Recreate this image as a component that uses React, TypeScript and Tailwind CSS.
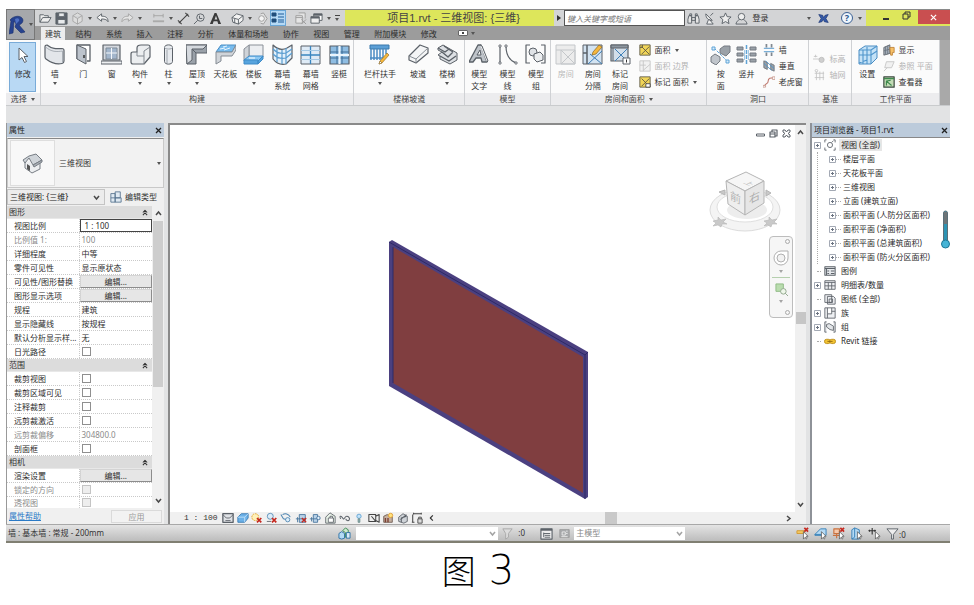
import React from "react";

type P = { children: React.ReactNode; className?: string; box?: string };

const Svg = ({ children, className = "w-[21px] h-[21px]", box = "0 0 21 21" }: P) => (
  <svg viewBox={box} className={`${className} shrink-0`} fill="none" stroke="#5b6168" strokeWidth="1" strokeLinejoin="round" aria-hidden="true">
    {children}
  </svg>
);

// 14px toolbar icon
const Mini = ({ children, className = "w-[13px] h-[13px]" }: P) => (
  <Svg box="0 0 14 14" className={className}>{children}</Svg>
);

const Caret = () => (
  <svg viewBox="0 0 4 3" className="w-1 h-[3px] shrink-0" aria-hidden="true"><path d="M0 0h4L2 3z" fill="#555" /></svg>
);

const Chevron = ({ dir = "down" }: { dir?: "down" | "up" | "right" }) => (
  <svg viewBox="0 0 7 7" className="w-[7px] h-[7px] shrink-0 pointer-events-none" fill="none" stroke="#4a4a4a" strokeWidth="1.5" aria-hidden="true">
    <path d={dir === "down" ? "M1 2l2.500 3L6 2" : dir === "up" ? "M1 5l2.500-3L6 5" : "M2 1l3 2.500L2 6"} />
  </svg>
);

const Pencil = () => (
  <g stroke="#8a6420" strokeWidth=".6"><path d="M11 17l7-8 2 2-7 8-3 1z" fill="#f5b73c" /><path d="M10 20l1-3 2 2z" fill="#fff" /></g>
);

/* ---------- Ribbon icons ---------- */
const icons: Record<string, React.ReactNode> = {
  cursor: <Svg><path d="M7 3v12l3-2.500 2.500 5 2-1-2.500-5h4z" fill="#fff" /></Svg>,
  wall: <Svg><path d="M1 3q0-2 2-2c5 4 9 4 15 3.500q2 0 2 2V17q0 2-2 2.500C12 21 6 18 2 15q-1-1-1-2z" fill="#e3e6ea" strokeWidth="1.200" /><path d="M1.500 3c6 5 11 5 17 4M18.500 7v12" stroke="#a9afb6" /></Svg>,
  door: <Svg><path d="M4 15V1h13v16h-3" fill="#fff" strokeWidth="1.300" /><path d="M4 1l9 4v15l-9-5z" fill="#bcc3cc" /><path d="M11 11v3" stroke="#333" strokeWidth="1.500" /></Svg>,
  window: <Svg><path d="M2 1h17v15H2z" fill="#d5d9df" strokeWidth="1.200" /><path d="M5 4h11v11H5z" fill="#a3b6cc" stroke="#7f8b98" /><path d="M10.500 4v11M5 9h11" stroke="#f4f7fa" /><path d="M0 17h21v3H0z" fill="#eef0f2" /></Svg>,
  part: <Svg><path d="M1 10q0-2 2-2h4V4q0-3 4-3h7q2 0 2 2v10l-6 7H3q-2 0-2-2z" fill="#eceef0" strokeWidth="1.200" /><path d="M7 8v4h7V7l6-4M14 12v8" stroke="#858b92" /></Svg>,
  column: <Svg><path d="M6.500 3.500v14c0 3.500 8 3.500 8 0v-14c0-3.500-8-3.500-8 0z" fill="#e7eaee" /><path d="M6.500 3.500c0 2 8 2 8 0M9 6v13" stroke="#a0a6ad" /></Svg>,
  roof: <Svg><path d="M0 1h21v8h-11v11H1z" fill="#9aa1a9" /><path d="M0 1h21l-4 4H6v11l-5 4z" fill="#d5d9de" /><path d="M6 5l4 4" /></Svg>,
  ceiling: <Svg><path d="M1 8l5-7h15l-4 7z" fill="#78bcee" stroke="#4b8ec4" /><path d="M5 5l5-1M9 6l6-2M8 3l4-1" stroke="#e8f5ff" /><path d="M1 8h16l4-7v5l-4 6H6v5l-5 3z" fill="#d0d4d9" stroke="#858c94" /></Svg>,
  floor: <Svg><path d="M6 1h14v12H6z" fill="#eceef1" stroke="#8a9098" /><path d="M1 5l5-4v12l-5 4z" fill="#cfd3d8" stroke="#8a9098" /><path d="M1 16l5-4h14l-5 5z" fill="#8cc8f3" stroke="#3f8bc8" /><path d="M1 16h14v4H1zM15 17l5-5v3l-5 5z" fill="#57a4de" stroke="#3f8bc8" /><path d="M6 14h6" stroke="#fff" /></Svg>,
  curtain: <Svg><path d="M1 1c5 5 10 5 14 3l5-3v13l-6 6C9 21 4 19 1 15z" fill="#e4f1fb" strokeWidth="1.200" /><path d="M1 5c5 5 9 5 13 4l6-4M1 10c5 5 9 5 13 4l6-5M5 4v14M10 6v14M14 4v16" stroke="#5a9dd0" strokeWidth="1.200" /></Svg>,
  grid: <Svg><path d="M1 2h19v18H1z" fill="#dfebf6" /><path d="M1 11h19M10.500 2v18" stroke="#3a86c0" strokeWidth="1.300" /><path d="M1 6.500h19M1 15.500h19" stroke="#a3c8e4" /></Svg>,
  mullion: <Svg><path d="M1 2h19v18H1z" fill="#8fbde2" strokeWidth="1.200" /><path d="M8 2v18M13 2v18M1 8h19M1 14h19" stroke="#3c6c97" /><path d="M10.500 2v18M1 11h19" stroke="#eaf4fc" strokeWidth="2" /></Svg>,
  rail: <Svg><path d="M1 1h19v4H1z" fill="#5b9fd6" stroke="#3a78ab" /><path d="M2 5v11M5 5v11M8 5v11M11 5v11M14 5v9M17 5v5M1 14h14" stroke="#4b8cc4" strokeWidth="1.500" /><Pencil /></Svg>,
  ramp: <Svg><path d="M1 12L12 1l8 3v5L8 19l-7-3z" fill="#f4f5f6" strokeWidth="1.200" /><path d="M1 12l7 3L20 4M8 15v4" stroke="#878d94" /></Svg>,
  stairs: <Svg><path d="M1 4l5-3 14 8v7l-7 4-10-5v-3l-2-1 4-3-4-2z" fill="#dde0e4" /><path d="M1 4l7 4 4-3M5 8l6 5 5-5M3 12l9 5 7-5M7 2l9 6" strokeWidth="1.400" /></Svg>,
  text: <Svg><path d="M0 18L9 1h3l6 17h-5l-1-4H7l-3 4z" fill="#bfc4ca" strokeWidth="1.300" /><path d="M8 11l3-5 1 5zM11 1l2 1 6 15-1 1" fill="#f4f5f6" /></Svg>,
  line: <Svg><path d="M3 2v17M9 2c0 9 4 15 11 17" strokeWidth="1.200" /><path d="M2 1h2v2H2zM2 18h2v2H2zM8 1h2v2H8zM18 18h2v2h-2z" fill="#fff" strokeWidth=".8" /></Svg>,
  group: <Svg><path d="M5 1H1v18h4M16 1h4v18h-4" strokeWidth="1.200" /><circle cx="8" cy="8" r="4" fill="#dfe2e6" /><path d="M9 10l6-2 3 3v5l-6 2-3-3z" fill="#eceef0" /></Svg>,
  room: <Svg><g stroke="#c4c7ca"><path d="M1 1h19v19H1z" fill="#ececec" /><path d="M6 6h14v14H6zM6 6l14 14M20 6L6 20M1 6h5" /></g></Svg>,
  separate: <Svg><path d="M1 1h19v19H1z" fill="#d3e3f1" /><path d="M5 1v8H1M5 9v11" strokeWidth="1.500" /><path d="M6 20L20 7M8 10l12 10" stroke="#3d7db5" /><path d="M11 8l6-7 3 2-6 7-4 1z" fill="#f5b73c" stroke="#8a6420" strokeWidth=".7" /></Svg>,
  tagroom: <Svg><path d="M1 1h17v16H1z" fill="#d3dee9" strokeWidth="1.200" /><path d="M1 1h17v3H1zM3 4v13" fill="#8d969f" /><path d="M5 17L17 5M5 5l12 12" stroke="#3f80b8" /><path d="M13 14h7v6h-7z" fill="#fff" /><path d="M16.500 15.500v3" stroke="#333" /></Svg>,
  byface: <Svg><path d="M10 5l4-3h6v6l-4 4-6-3z" fill="#9aa1a8" stroke="#757b82" /><path d="M1 13l4-3 5 3v4l-4 4-5-3z" fill="#c0c5cb" stroke="#757b82" /><path d="M4 4l13 13" stroke="#5fa3d6" strokeDasharray="3 1" /><path d="M2 3h3v3H2zM16 16h3v3h-3z" fill="#d7ecfb" stroke="#5fa3d6" /></Svg>,
  shaft: <Svg><path d="M1 3h6v3H1zM1 9h6v3H1zM1 15h6v3H1zM14 3h6v3h-6zM14 9h6v3h-6zM14 15h6v3h-6z" fill="#9aa1a8" stroke="#757b82" /><path d="M10.500 1v19" stroke="#5fa3d6" strokeWidth="1.500" strokeDasharray="4 1" /><path d="M8.500 6v10M12.500 6v10" stroke="#a6cbe6" /></Svg>,
  set: <Svg><path d="M2 6l6-4h12v12l-6 6H2z" fill="#c4e2f7" stroke="#4a8cc2" /><path d="M2 6h12v14M14 6l6-4M2 11h12l6-4M6 6v14M10 6v14M10 3v13l-8 3" stroke="#4f95cc" strokeWidth="1.100" /></Svg>,
  area: <Mini className="w-3 h-3"><path d="M1 1h12v12H1z" fill="#f1d558" stroke="#5a5540" /><path d="M3 3l9 9M12 3l-9 9M1 4h3V1" stroke="#5a5540" /></Mini>,
  bound: <Mini className="w-3 h-3"><path d="M1 1h12v12H1zM5 1v12M1 6h7M5 12l8-7" fill="#f1f1f1" stroke="#c4c4c4" /></Mini>,
  tagarea: <Mini className="w-3 h-3"><path d="M1 1h12v12H1z" fill="#f1d558" stroke="#5a5540" /><path d="M3 3l9 9M12 3l-9 9" stroke="#5a5540" /><path d="M8 9h5v4H8z" fill="#fff" stroke="#444" /></Mini>,
  owall: <Mini className="w-3 h-3"><path d="M1 5h12M1 9h12" stroke="#3c8ac6" /><path d="M4 0v4M10 0v4M4 10v4M10 10v4" stroke="#808890" strokeWidth="2" /></Mini>,
  vertical: <Mini className="w-3 h-3"><path d="M1 1l4 2v8L1 9zM9 4l4 2v7l-4-2z" fill="#9aa1a8" stroke="#6d747b" /><path d="M3 1l10 9M1 4l9 8" stroke="#4b93c9" /></Mini>,
  dormer: <Mini className="w-3 h-3"><path d="M2 12c0-4 4-2 4-6s3-4 6-4" stroke="#c07a70" strokeWidth="1.300" /><path d="M11 1h3v3h-3zM0 11h3v2H0z" fill="#fff" stroke="#c89a90" /></Mini>,
  level: <Mini className="w-3 h-3"><path d="M0 7h8M3 2v3M1 4h4" stroke="#c4c4c4" /><circle cx="10" cy="8" r="3" fill="#cfcfcf" stroke="#bcbcbc" /></Mini>,
  axis: <Mini className="w-3 h-3"><path d="M2 5h11M2 10h11M4 3v10M8 3v10M12 3v10" stroke="#c6c6c6" /><circle cx="4" cy="2" r="1.500" stroke="#c6c6c6" /></Mini>,
  show: <Mini className="w-3 h-3"><path d="M1 4l7-3v10l-7 2z" fill="#a8b2bd" /><path d="M3 3v9M5.500 2v10M1 8l7-2" stroke="#6b757f" /><path d="M8 4h5v6h-2v3H9z" fill="#f6c067" stroke="#bd8136" /></Mini>,
  refplane: <Mini className="w-3 h-3"><path d="M4 2h9l-3 7H2zM1 13l4-4" fill="#f1f1f1" stroke="#c4c4c4" /></Mini>,
  viewer: <Mini className="w-3 h-3"><path d="M1 1h12v12H1z" fill="#c3dcb6" stroke="#3d4a40" strokeWidth="1.400" /><path d="M1 3h12M4 6l6 5M4 11V6l5-1" stroke="#3f8a4d" strokeWidth="1.400" /></Mini>,
};

type Tool = { icon: string; label: string[]; drop?: boolean; off?: boolean; w?: string };

const BigTool = ({ icon, label, drop, off, w = "flex-1" }: Tool) => (
  <button className={`${w} min-w-0 flex flex-col items-center pt-1 leading-3 whitespace-nowrap ${off ? "text-[#b8b8b8]" : ""}`}>
    {icons[icon]}
    <span className="mt-[3px]">{label.map((l) => <span key={l} className="block">{l}</span>)}</span>
    {drop && label.length === 1 && <span className="mt-[2px]"><Caret /></span>}
  </button>
);

const SmallTool = ({ icon, label, drop, off }: { icon: string; label: string; drop?: boolean; off?: boolean }) => (
  <button className={`flex items-center gap-1 h-4 whitespace-nowrap ${off ? "text-[#b4b4b4]" : ""}`}>
    {icons[icon]}
    {label}
    {drop && <Caret />}
  </button>
);

const Panel = ({ title, grow, drop, children }: { title: string; grow: string; drop?: boolean; children: React.ReactNode }) => (
  <section className={`${grow} min-w-0 flex flex-col border-r border-[#cfd1d4]`}>
    <div className="flex h-[53px]">{children}</div>
    <h2 className="flex items-center justify-center gap-1 h-3 bg-[#ececee] text-[#444] leading-3 whitespace-nowrap">
      {title}{drop && <Caret />}
    </h2>
  </section>
);

/* ---------- Title bar ---------- */
const quickIcons: Record<string, React.ReactNode> = {
  打开: <Mini><path d="M1 11V3h4l1 1h4v2M1 11l3-5h9l-3 5z" fill="#eee" /></Mini>,
  保存: <Mini><path d="M1 1h12v12H1z" fill="#5d636c" /><path d="M4 1h6v4H4zM3 8h8v5H3z" fill="#e8eaec" /></Mini>,
  同步: <Mini><path d="M2 4l5-3 5 3v6l-5 3-5-3zM2 4l5 3 5-3M7 7v6" fill="#ddd" stroke="#a6a6a6" /></Mini>,
  放弃: <Mini><path d="M1 6l5-4v2.500c5 0 7 2 7 6-1-2-3-3-7-3V10z" fill="#f4f4f4" /></Mini>,
  重做: <Mini><path d="M13 6L8 2v2.500c-5 0-7 2-7 6 1-2 3-3 7-3V10z" fill="#e4e4e4" stroke="#a5a5a5" /></Mini>,
  测量: <Mini><path d="M2 4h10M2 2v4M12 2v4" stroke="#a4a4a4" /><path d="M1 9h12v2H1z" fill="#aaa" stroke="none" /></Mini>,
  对齐标注: <Mini><path d="M2 12L12 2M1 9l4 4M9 1l4 4" stroke="#444" strokeWidth="1.200" /></Mini>,
  标记: <Mini><circle cx="8" cy="6" r="4" /><path d="M5 9l-4 4M7 4v3h3" /></Mini>,
  文字: <Mini><path d="M1 13L6 1h2l5 12h-3l-1-3H5l-1 3zM6 8h3L7.500 4z" fill="#3a3a3a" stroke="none" fillRule="evenodd" /></Mini>,
  三维视图: <Mini><path d="M1 6l5-4 7 2v5l-5 4-6-2z" fill="#f3f3f3" /><path d="M1 6l7 2 5-4M8 8v5M4 7v5" /></Mini>,
  剖面: <Mini><path d="M5 2l3-1 4 6-4 6-3-1" fill="#e3e3e3" stroke="#9a9a9a" /><circle cx="6" cy="7" r="3" fill="#f5f5f5" stroke="#9a9a9a" /></Mini>,
  细线: <Mini className="w-[14px] h-[14px]"><path d="M1 2h4v3H1zM1 8h4v3H1z" fill="#214e7c" stroke="#214e7c" /><path d="M7 3h6M7 6h6M7 9h6M7 11h6" stroke="#1f5d99" strokeWidth="1.200" /></Mini>,
  关闭隐藏窗口: <Mini><path d="M5 1h7v6M2 4h7v8H2zM2 6h7" fill="#e5e5e5" stroke="#9d9d9d" /><path d="M8 8l5 5M13 8l-5 5" stroke="#999" /></Mini>,
  切换窗口: <Mini><path d="M4 2h9v7H4z" fill="#fff" /><path d="M1 5h9v7H1z" fill="#eee" /><path d="M1 6h9M4 3h9" strokeWidth="2" /></Mini>,
};
const quick = ["打开", "保存", "同步", "|", "放弃", "|", "重做", "|", "-", "测量", "|", "对齐标注", "标记", "文字", "-", "三维视图", "|", "剖面", "细线", "-", "关闭隐藏窗口", "切换窗口", "|"];

const TitleBar = () => (
  <div className="flex h-[17px] bg-[#d3d4d6] border-t border-[#8a8a8a]">
    <div className="flex items-center pl-[2px] pr-1">
      {quick.map((q, i) =>
        q === "|" ? <span key={i} className="w-[9px] flex justify-center"><Caret /></span>
        : q === "-" ? <span key={i} className="w-[6px]" />
        : (
          <button key={i} aria-label={q} className={`w-4 h-4 flex items-center justify-center ${q === "细线" ? "bg-[#b5d9f5] border border-[#6aa6d6]" : ""}`}>
            {quickIcons[q]}
          </button>
        )
      )}
      <button aria-label="自定义快速访问工具栏" className="w-2 flex flex-col items-center gap-[2px]">
        <span className="w-[5px] h-px bg-[#444]" /><Caret />
      </button>
    </div>
    <h1 className="flex-[205] min-w-0 pl-2 bg-[#dde65b] text-[11px] leading-4 text-center text-[#444] whitespace-nowrap font-['Liberation_Sans','Noto_Sans_CJK_SC',sans-serif]">项目1.rvt - 三维视图: {"{三维}"}</h1>
    <div className="flex-[134] min-w-0 flex items-center">
      <svg viewBox="0 0 4 6" className="w-1 h-[6px] mx-[3px] shrink-0"><path d="M0 0l4 3-4 3z" fill="#333" /></svg>
      <input aria-label="搜索" placeholder="键入关键字或短语" className="w-full min-w-0 h-4 px-[2px] bg-white border border-[#555] italic placeholder:text-[#777]" />
    </div>
    <div className="flex-[182] min-w-0 flex items-center gap-[3px] pl-[2px] text-[#333]">
      <button aria-label="查找"><Mini><path d="M2 4h3v8H1V8zM9 4h3l1 4v4H9zM5 6h4v3H5zM3 2h2v2H3zM9 2h2v2H9z" fill="#e4e4e4" /></Mini></button>
      <button aria-label="通讯中心"><Mini><path d="M3 2c0 5 3 7 7 7M3 2l7 7M8 4l3-3M7 8l4 5H4l2-5" fill="#eee" /></Mini></button>
      <button aria-label="收藏夹"><Mini><path d="M7 1l1.800 4 4.200.4-3.200 2.800 1 4.300L7 10.300 3.200 12.500l1-4.300L1 5.400 5.200 5z" fill="#eee" /></Mini></button>
      <button className="flex items-center gap-1 whitespace-nowrap">
        <Mini><circle cx="7" cy="5" r="3.500" fill="#eee" /><path d="M1 13c1-4 3-4 4-5M13 13c-1-4-3-4-4-5M1 13h12" /></Mini>登录
      </button>
      <span className="ml-auto pr-1"><Caret /></span>
      <button aria-label="Exchange 应用"><Mini className="w-[11px] h-[11px]"><path d="M1 2l5 1 1 3 2-3 4-1-3 5 3 5-5-1-1-3-2 3-4 1 3-5z" fill="#3559a8" stroke="#26407c" /></Mini></button>
      <button aria-label="帮助" className="ml-[9px] w-3 h-3 shrink-0 rounded-full border border-[#3a5f93] bg-[#eef5fc] text-[#28558f] text-[9px] leading-[10px] font-bold">?</button>
      <span className="pl-[2px] pr-1"><Caret /></span>
    </div>
    <div className="flex w-[84px] shrink-0 bg-[#dde65b]">
      <button aria-label="最小化" className="flex-1 flex justify-end items-center pr-[5px]"><span className="w-[6px] h-[2px] mt-[2px] bg-[#333]" /></button>
      <button aria-label="还原" className="flex-1 flex justify-center pt-[1px]"><Svg box="0 0 9 9" className="w-[9px] h-[9px]"><path d="M3 3V1h5v5H6M1 3h5v5H1z" stroke="#333" /></Svg></button>
      <button aria-label="关闭" className="w-8 h-[14px] bg-[#c94f50] flex items-center justify-center"><Svg box="0 0 8 8" className="w-[7px] h-[7px]"><path d="M1 1l6 6M7 1L1 7" stroke="#fff" strokeWidth="1.400" /></Svg></button>
    </div>
  </div>
);

const tabs = ["建筑", "结构", "系统", "插入", "注释", "分析", "体量和场地", "协作", "视图", "管理", "附加模块", "修改"];

const Header = () => (
  <header>
    <div className="flex">
      <button aria-label="应用程序菜单" className="w-[29px] shrink-0 flex items-center justify-center gap-[3px] bg-[#a6a8ab] border border-[#777]">
        <Svg box="0 0 17 20" className="w-[17px] h-5">
          <path d="M1 5C5 0 13 0 14 5c0 3-2 4-4 5l6 7-4 1-6-6 1-3-2-3-1 12-4 1 2-13z" fill="#27438f" stroke="#1a2f6c" strokeWidth=".6" />
          <path d="M6 4c3-2 5 0 4 2L7 9z" fill="#4f71c4" stroke="none" />
        </Svg>
        <Caret />
      </button>
      <div className="flex-1 min-w-0">
        <TitleBar />
        <nav className="flex items-end h-[14px] bg-[#9c9c9c] pl-[6px]">
          <div className="flex justify-between w-[400px]">
            {tabs.map((t, i) => (
              <a key={t} href="#" className={`px-1 h-[13px] leading-[13px] whitespace-nowrap ${i === 0 ? "bg-[#ececed]" : "text-[#2c2c2c]"}`}>{t}</a>
            ))}
          </div>
          <button aria-label="最小化功能区" className="ml-[17px] mb-1 flex items-center gap-[3px]">
            <span className="w-[10px] h-[6px] rounded-[1px] bg-white border border-[#666] flex items-center justify-center"><span className="w-[2px] h-[2px] bg-[#444]" /></span>
            <Caret />
          </button>
        </nav>
      </div>
    </div>
    <div className="flex bg-[#fbfbfb] border-b border-[#c9cbcd]">
      <Panel title="选择" grow="flex-[34]" drop>
        <button className="mx-auto mt-[2px] w-[27px] h-[50px] flex flex-col items-center pt-[2px] leading-3 bg-[#b9d9f4] border border-[#79abd8] whitespace-nowrap">
          {icons.cursor}<span className="mt-[2px]">修改</span>
        </button>
      </Panel>
      <Panel title="构建" grow="flex-[316]">
        <BigTool icon="wall" label={["墙"]} drop />
        <BigTool icon="door" label={["门"]} />
        <BigTool icon="window" label={["窗"]} />
        <BigTool icon="part" label={["构件"]} drop />
        <BigTool icon="column" label={["柱"]} drop />
        <BigTool icon="roof" label={["屋顶"]} drop />
        <BigTool icon="ceiling" label={["天花板"]} />
        <BigTool icon="floor" label={["楼板"]} drop />
        <BigTool icon="curtain" label={["幕墙", "系统"]} />
        <BigTool icon="grid" label={["幕墙", "网格"]} />
        <BigTool icon="mullion" label={["竖梃"]} />
      </Panel>
      <Panel title="楼梯坡道" grow="flex-[111]">
        <BigTool icon="rail" label={["栏杆扶手"]} drop w="flex-[52]" />
        <BigTool icon="ramp" label={["坡道"]} w="flex-[25]" />
        <BigTool icon="stairs" label={["楼梯"]} drop w="flex-[34]" />
      </Panel>
      <Panel title="模型" grow="flex-[86]">
        <BigTool icon="text" label={["模型", "文字"]} />
        <BigTool icon="line" label={["模型", "线"]} />
        <BigTool icon="group" label={["模型", "组"]} />
      </Panel>
      <Panel title="房间和面积" grow="flex-[157]" drop>
        <BigTool icon="room" label={["房间"]} off w="flex-[30]" />
        <BigTool icon="separate" label={["房间", "分隔"]} w="flex-[26]" />
        <BigTool icon="tagroom" label={["标记", "房间"]} w="flex-[30]" />
        <div className="flex-[70] min-w-0 pl-1 pt-[2px]">
          <SmallTool icon="area" label="面积" drop />
          <SmallTool icon="bound" label="面积 边界" off />
          <SmallTool icon="tagarea" label="标记 面积" drop />
        </div>
      </Panel>
      <Panel title="洞口" grow="flex-[102]">
        <BigTool icon="byface" label={["按", "面"]} w="flex-[28]" />
        <BigTool icon="shaft" label={["竖井"]} w="flex-[26]" />
        <div className="flex-[48] min-w-0 pl-1 pt-[2px]">
          <SmallTool icon="owall" label="墙" />
          <SmallTool icon="vertical" label="垂直" />
          <SmallTool icon="dormer" label="老虎窗" />
        </div>
      </Panel>
      <Panel title="基准" grow="flex-[42]">
        <div className="pl-1 pt-[11px]">
          <SmallTool icon="level" label="标高" off />
          <SmallTool icon="axis" label="轴网" off />
        </div>
      </Panel>
      <Panel title="工作平面" grow="flex-[88]">
        <BigTool icon="set" label={["设置"]} w="flex-[31]" />
        <div className="flex-[57] min-w-0 pt-[2px]">
          <SmallTool icon="show" label="显示" />
          <SmallTool icon="refplane" label="参照 平面" off />
          <SmallTool icon="viewer" label="查看器" />
        </div>
      </Panel>
      <div className="w-[10px] shrink-0 bg-[#a9a9a9]" />
    </div>
  </header>
);

/* ---------- Properties ---------- */
type Row = { name: string; kind?: "head" | "text" | "input" | "button" | "check"; value?: string; off?: boolean };
const rows: Row[] = [
  { name: "图形", kind: "head" },
  { name: "视图比例", kind: "input", value: "1 : 100" },
  { name: "比例值 1:", value: "100", off: true },
  { name: "详细程度", value: "中等" },
  { name: "零件可见性", value: "显示原状态" },
  { name: "可见性/图形替换", kind: "button" },
  { name: "图形显示选项", kind: "button" },
  { name: "规程", value: "建筑" },
  { name: "显示隐藏线", value: "按规程" },
  { name: "默认分析显示样...", value: "无" },
  { name: "日光路径", kind: "check" },
  { name: "范围", kind: "head" },
  { name: "裁剪视图", kind: "check" },
  { name: "裁剪区域可见", kind: "check" },
  { name: "注释裁剪", kind: "check" },
  { name: "远剪裁激活", kind: "check" },
  { name: "远剪裁偏移", value: "304800.0", off: true },
  { name: "剖面框", kind: "check" },
  { name: "相机", kind: "head" },
  { name: "渲染设置", kind: "button" },
  { name: "锁定的方向", kind: "check", off: true },
  { name: "透视图", kind: "check", off: true },
];

const Value = ({ name, kind, value, off }: Row) => {
  if (kind === "input") return <input aria-label={name} defaultValue={value} className="block w-full h-[13px] px-1 bg-white border border-[#444]" />;
  if (kind === "button") return <button aria-label={`${name} 编辑`} className="block w-full h-[13px] leading-[11px] bg-[#e6e6e6] border border-[#d4d4d4] border-b-[#8c8c8c] border-r-[#8c8c8c]">编辑...</button>;
  if (kind === "check") return <input type="checkbox" aria-label={name} disabled={off} className={`block appearance-none w-[9px] h-[9px] ml-[2px] border ${off ? "border-[#c4c4c4] bg-[#eee]" : "border-[#8f8f8f] bg-white"}`} />;
  return <span className="pl-[2px]">{value}</span>;
};

const PanelTitle = ({ children }: { children: React.ReactNode }) => (
  <div className="flex items-center justify-between h-[14px] px-[2px] bg-[#bccbdb] text-[#222]">
    <h2>{children}</h2>
    <button aria-label="关闭"><Svg box="0 0 7 7" className="w-[7px] h-[7px]"><path d="M1 1l5 5M6 1L1 6" stroke="#222" strokeWidth="1.300" /></Svg></button>
  </div>
);

const Properties = () => (
  <aside className="w-[158px] shrink-0 flex flex-col bg-[#f0f0f0] border-l border-[#999]">
    <PanelTitle>属性</PanelTitle>
    <button className="flex items-center h-[50px] mt-[1px] pr-[2px] border border-[#c9c9c9] border-t-[#888] bg-[#f2f2f2] text-left">
      <span className="w-[45px] h-[46px] ml-[2px] flex items-center justify-center bg-[#f8f8f8] border border-[#dedede]">
        <Svg><path d="M3 9v6l7 5 8-4V7" fill="#eceef0" stroke="#777d84" /><path d="M1 7l6-4 7-2 6 6-9 5-4-7-4 5z" fill="#cfd4d9" stroke="#777d84" /><path d="M11 12l9-5v2l-8 5z" fill="#aab0b7" stroke="#777d84" /><path d="M5 11l3 2v5l-3-2z" fill="#555" stroke="none" /></Svg>
      </span>
      <span className="flex-1 pl-1">三维视图</span>
      <Caret />
    </button>
    <div className="flex items-center h-[18px] gap-[5px]">
      <div className="flex items-center w-[98px] h-4 pr-1 bg-[#ececec] border border-[#c4c4c4]">
        <select aria-label="类型过滤器" className="flex-1 min-w-0 appearance-none bg-transparent pl-[2px] text-[#222]"><option>三维视图: {"{三维}"}</option></select>
        <Chevron />
      </div>
      <button className="flex items-center gap-[3px] whitespace-nowrap">
        <Mini className="w-3 h-3"><path d="M1 3h5v10H1zM6 1h6v7H6zM6 8h7v5H6zM1 8h5" fill="#dfe9f2" stroke="#56738f" /></Mini>编辑类型
      </button>
    </div>
    <div className="flex">
      <table className="flex-1 border-separate border-spacing-0 bg-white">
        <tbody className="block w-full">
          {rows.map((r, i) =>
            r.kind === "head" ? (
              <tr key={r.name} className="flex items-center justify-between h-[13px] pl-[2px] pr-1 bg-[#dcdcdc] border-b border-[#e8e8e8]">
                <th className="font-normal leading-3">{r.name}</th>
                <td><Svg box="0 0 7 8" className="w-[6px] h-[7px]"><path d="M1 4l2.500-2.500L6 4M1 7l2.500-2.500L6 7" stroke="#333" strokeWidth="1.200" /></Svg></td>
              </tr>
            ) : (
              <tr key={r.name} className={`flex border-dotted border-[#c9c9c9] ${i === rows.length - 1 ? "h-[11px]" : "h-[14px] border-b"} ${r.off ? "text-[#8b8b8b]" : "text-[#2e2e2e]"}`}>
                <th className="w-1/2 flex items-center pl-[7px] font-normal leading-[11px] whitespace-nowrap border-r border-dotted border-[#c9c9c9]">{r.name}</th>
                <td className="w-1/2 flex items-center leading-[11px]"><div className="w-full"><Value {...r} /></div></td>
              </tr>
            )
          )}
        </tbody>
      </table>
      <div className="flex flex-col items-center w-3 shrink-0 py-1 gap-1 bg-[#f0f0f0]">
        <Chevron dir="up" />
        <span className="flex-[170] w-[10px] bg-[#cdcdcd]" />
        <span className="flex-[105]" />
        <Chevron />
      </div>
    </div>
    <div className="flex items-center justify-between h-4 px-[2px]">
      <a href="#" className="text-[#2a7ac6] leading-3 underline">属性帮助</a>
      <button className="w-[51px] h-[13px] leading-[11px] border border-[#dadada] bg-[#f2f2f2] text-[#999]">应用</button>
    </div>
  </aside>
);

/* ---------- Drawing area ---------- */
const viewIcons = [
  <><path d="M1 2h12v10H1z" fill="#dfe2e6" strokeWidth="1.500" /><path d="M1 3l4 4h4l4-4M4 10h6" /></>,
  <><path d="M1 6l4-4h8v5l-4 5H1z" fill="#6cb1e8" stroke="#3577b0" /><path d="M1 6h8l4-4M9 6v6" stroke="#c8e5fa" /></>,
  <><circle cx="5" cy="6" r="4" fill="#fff0b8" stroke="#dd9a1c" strokeDasharray="2 1" /><path d="M7 7l5 5M12 7l-5 5" stroke="#c5281f" strokeWidth="2" /></>,
  <><circle cx="5" cy="5" r="3.500" fill="#dcecf8" stroke="#548bb5" /><path d="M1 11h5" /><path d="M7 7l5 5M12 7l-5 5" stroke="#c5281f" strokeWidth="2" /></>,
  <><path d="M1 3l3 5 4 1M3 3c3-2 7-1 9 3" stroke="#4d84b0" strokeWidth="1.200" /><circle cx="9" cy="9" r="2.500" fill="#dceefb" stroke="#4d84b0" /></>,
  <><path d="M1 8h12M3 6v6M5 3v9h7V3z" fill="#b9d2e8" stroke="#43709a" /><path d="M8 7l5 5M13 7l-5 5" stroke="#c5281f" strokeWidth="1.600" /></>,
  <><path d="M1 8h12M3 6v5M5 3v9h5V3z" fill="#b9d2e8" stroke="#43709a" /><circle cx="11" cy="7" r="2" fill="#e5f3ff" stroke="#43709a" /></>,
  <><path d="M2 6l5-5 6 4v8H2z" fill="#e8f2e8" /><path d="M5 7h6v5H5zM7 7V5h3v2" fill="#fff" /></>,
  <><path d="M1 6c1-3 3 1 4 2s2-3 4-3 4 2 3 4-4 1-4-1M1 6l1 2" strokeWidth="1.200" /></>,
  <><circle cx="7" cy="5" r="2.500" fill="#c4e3f9" stroke="#5a9fd2" /><path d="M6 8h2v4H6z" fill="#9bb" stroke="#688" /></>,
  <><path d="M1 3h8v8H1zM9 5l4-2v9l-4-2M4 5l5 6" fill="#eee" stroke="#444" strokeWidth="1.200" /></>,
  <><path d="M2 5l4-2 6 3v6H2z" fill="#c5b0a0" stroke="#6d5a50" /><path d="M4 7v5M7 7v5" stroke="#7d3f33" strokeWidth="1.600" /><circle cx="10" cy="4" r="2.500" fill="#ffe27c" stroke="#e09a30" /></>,
  <><path d="M2 6l5-4 5 3v6l-4 2-6-2z" fill="#cfd3d8" /><path d="M4 9l7-6M5 12V7l6-2" strokeWidth="1.200" /></>,
  <><path d="M3 2h9M2 3v9M3 1v2M12 1v2M1 12h3" stroke="#444" strokeWidth="1.200" /><path d="M8 8h5v5H8zM9 8V6h3v2" fill="#ddd" stroke="#444" /></>,
  <><path d="M8 4L5 7l3 3" stroke="#333" strokeWidth="1.300" /></>,
];

const ViewCube = () => (
  <Svg box="0 0 72 62" className="w-[72px] h-[62px]">
    <ellipse cx="36" cy="39" rx="35" ry="21" fill="#f4f4f4" stroke="#dcdcdc" />
    <ellipse cx="36" cy="36" rx="28" ry="15" fill="#fff" stroke="#e0e0e0" />
    <ellipse cx="38" cy="39" rx="20" ry="9" fill="#ededed" stroke="none" />
    <path d="M17 10L37 1l18 9-19 10z" fill="#f6f6f6" stroke="#b5b5b5" />
    <path d="M17 10l19 10v24L19 33z" fill="#eee" stroke="#b5b5b5" />
    <path d="M36 20l19-10v22L36 44z" fill="#e6e6e6" stroke="#b5b5b5" />
    <text x="0" y="0" fontSize="8" fill="#b5b5b5" stroke="none" transform="matrix(.9 .4 -.8 .4 34 12)">上</text>
    <text x="0" y="0" fontSize="11" fill="#b5b5b5" stroke="none" transform="matrix(1 .5 0 1 21 28)">前</text>
    <text x="0" y="0" fontSize="11" fill="#adadad" stroke="none" transform="matrix(1 -.5 0 1 40 33)">右</text>
    <path d="M4 50l5-1 0-3 3 3 5-1-3 3 4 2-5 0-1 3-3-2-5 1 3-3zM55 50l5-1 0-3 3 3 5-1-3 3 3 2-5 0-1 3-3-2-4 1 3-3z" fill="#c9c9c9" stroke="#b5b5b5" strokeWidth=".6" />
    <path d="M10 21l6-2v5zM57 19l5 3-5 3z" fill="#c9c9c9" stroke="#b5b5b5" />
  </Svg>
);

const DrawingArea = () => (
  <main className="flex-1 min-w-0 flex flex-col bg-white border-l-2 border-t-2 border-[#8a8a8a]">
    <div className="flex-1 flex">
      <div className="relative flex-1">
        <svg viewBox="2 0 202 260" className="absolute left-[35%] top-[115px] w-[202px] h-[260px]" aria-label="墙">
          <path d="M2 2l3-2 196 112v145l-3 2L2 146z" fill="#4b4080" />
          <path d="M6 7l190 110v136L6 143z" fill="#803e40" />
          <path d="M2 2l196 113v144M198 115l3-3M6 143V7" fill="none" stroke="#2c2a68" />
        </svg>
        <div className="absolute right-1 top-1 flex items-center gap-1">
          <button aria-label="最小化视图"><Svg box="0 0 9 9" className="w-[9px] h-[9px]"><path d="M.5 5h8v2h-8z" fill="#fff" /></Svg></button>
          <button aria-label="还原视图"><Svg box="0 0 9 9" className="w-[9px] h-[9px]"><path d="M3 3V1h5v6H6M1 3h5v5H1zM1 5h5" strokeWidth="1.200" /></Svg></button>
          <button aria-label="关闭视图"><Svg box="0 0 9 9" className="w-[9px] h-[9px]"><path d="M1 1h2l1.500 2L6 1h2v2L6 4.500 8 6v2H6L4.500 6 3 8H1V6l2-1.500L1 3z" /></Svg></button>
        </div>
        <div className="absolute right-[14px] top-[46px]"><ViewCube /></div>
        <div className="absolute right-[2px] top-[111px] w-6 h-[82px] flex flex-col items-center rounded-[4px] border border-[#bdbdbd] bg-[#f6f6f6]">
          <span className="self-end m-[2px] w-[5px] h-[5px] rounded-full border border-[#aaa]" />
          <button aria-label="控制盘" className="mt-1"><Svg className="w-4 h-4" box="0 0 16 16"><path d="M8 1h7v7a7 7 0 1 1-7-7z" fill="#fff" stroke="#b0b0b0" /><circle cx="8" cy="8" r="4" stroke="#b0b0b0" fill="#f2f2f2" /></Svg></button>
          <span className="my-1 opacity-50"><Caret /></span>
          <span className="w-[18px] h-px bg-[#b5cfae]" />
          <button aria-label="区域放大" className="mt-[5px]"><Mini><path d="M1 1h8v8H1z" fill="#b9dcae" stroke="#8fba84" /><circle cx="9" cy="9" r="3" fill="#eef7ea" stroke="#8fa58a" /><path d="M11 11l3 3" stroke="#8fa58a" /></Mini></button>
          <span className="my-1 opacity-50"><Caret /></span>
          <span className="self-end mt-auto m-[2px] w-[5px] h-[5px] rounded-full border border-[#aaa]" />
        </div>
      </div>
      <div className="w-[11px] flex flex-col items-center py-1 bg-[#f0f0f0]">
        <Chevron dir="up" />
        <span className="flex-[175]" />
        <span className="w-[10px] h-3 bg-[#c6c6c6]" />
        <span className="flex-[177]" />
        <Chevron />
      </div>
    </div>
    <div className="flex items-center h-3 bg-[#f0f0f0] pl-[14px] pr-[14px]">
      <span className="w-[38px] shrink-0 whitespace-pre font-['Liberation_Mono','Noto_Sans_CJK_SC',monospace]">1 : 100</span>
      <div className="w-[216px] shrink-0 flex justify-between">
        {viewIcons.map((v, i) => <button key={i} aria-label={`视图控制 ${i + 1}`}><Mini className="w-3 h-3">{v}</Mini></button>)}
      </div>
      <span className="flex-[166]" />
      <span className="w-3 h-3 bg-[#c9c9c9]" />
      <span className="flex-[168]" />
      <Chevron dir="right" />
    </div>
  </main>
);

/* ---------- Project browser ---------- */
const Box = () => (
  <svg viewBox="0 0 7 7" className="w-[7px] h-[7px] shrink-0" fill="#fff" stroke="#a3a9b4" aria-hidden="true"><path d="M.5.5h6v6h-6z" /><path d="M2 3.500h3M3.500 2v3" stroke="#6c7482" /></svg>
);
const views = ["楼层平面", "天花板平面", "三维视图", "立面 (建筑立面)", "面积平面 (人防分区面积)", "面积平面 (净面积)", "面积平面 (总建筑面积)", "面积平面 (防火分区面积)"];
const nodes: { label: string; open?: boolean; icon: React.ReactNode }[] = [
  { label: "图例", icon: <path d="M1 2h12v10H1zM1 4h12M4 7h2M8 7h4M4 10h2M8 10h4M3 4v8" fill="#e8ebee" strokeWidth="1.200" /> },
  { label: "明细表/数量", open: true, icon: <path d="M1 2h12v10H1zM1 4h12M1 8h12M5 4v8M9 4v8" fill="#eef0f3" /> },
  { label: "图纸 (全部)", icon: <path d="M1 2h8v9H1zM4 4h7l2 2v7H4zM6 7h4v4H6z" fill="#eef0f3" /> },
  { label: "族", open: true, icon: <path d="M1 1h12v12H1zM4 1v7h5V1M4 8v5M9 5h4" fill="#eef0f3" /> },
  { label: "组", open: true, icon: <path d="M3 1H1v12h2M11 1h2v12h-2M3 4l3-1 5 3v5l-4-1-4-3z" fill="#e2e5e8" /> },
  { label: "Revit 链接", icon: <><rect x="0.500" y="5" width="7" height="5" rx="2.500" fill="#f1c232" stroke="#b98a14" /><rect x="6.500" y="5" width="7" height="5" rx="2.500" fill="#f1c232" stroke="#b98a14" /><path d="M4 7.500h6" stroke="#8a6510" /></> },
];

const Browser = () => (
  <aside className="relative w-[140px] shrink-0 flex flex-col bg-white border-l-2 border-[#8e9298]">
    <PanelTitle>项目浏览器 - 项目1.rvt</PanelTitle>
    <ul className="pl-[2px] border-t border-[#888] whitespace-nowrap text-[#2a2a2a]">
      <li>
        <div className="flex items-center h-[14px] gap-[3px]">
          <Box />
          <Mini className="w-3 h-3"><circle cx="7" cy="7" r="3" /><path d="M1 4V1h2M11 1h2v3M1 10v3h2M11 13h2v-3M9 4l2-2" /></Mini>
          <span className="px-[2px] leading-3 bg-[#e6e6e6]">视图 (全部)</span>
        </div>
        <ul className="ml-[3px] pl-[11px] border-l border-dotted border-[#aaa]">
          {views.map((v) => (
            <li key={v} className="flex items-center h-[14px]">
              <Box /><span className="w-[5px] mr-[2px] border-t border-dotted border-[#aaa]" />{v}
            </li>
          ))}
        </ul>
      </li>
      {nodes.map((n) => (
        <li key={n.label} className="flex items-center h-[14px] gap-[3px]">
          {n.open ? <Box /> : <span className="w-1 ml-[3px] border-t border-dotted border-[#aaa]" />}
          <Mini className="w-3 h-3">{n.icon}</Mini>
          <span className="pl-[2px]">{n.label}</span>
        </li>
      ))}
    </ul>
    <Svg box="0 0 9 39" className="absolute right-0 top-[87px] w-[9px] h-[39px]">
      <rect x="2.500" y="1" width="4" height="32" rx="2" fill="#2d93b3" stroke="#5b6e77" />
      <path d="M3 2h3v12H3z" fill="#6d7477" stroke="none" />
      <circle cx="4.500" cy="34" r="4" fill="#45b4d6" stroke="#1d7796" />
    </Svg>
  </aside>
);

/* ---------- Status bar ---------- */
const Arrow = () => <path d="M8 5v8l2-2 1 2 1-1-1-2h2z" fill="#fff" stroke="#555" strokeWidth=".8" />;
const selectIcons = [
  <><path d="M1 4h8v3H1z" fill="#f3c860" stroke="#d39b34" /><path d="M9 1l4 4M13 1L9 5" stroke="#c5281f" strokeWidth="1.800" /><Arrow /></>,
  <><path d="M1 8l6-6h6v7H1zM1 8h8" fill="#b5daf4" stroke="#357fb8" /><Arrow /></>,
  <><path d="M2 2h6v5H2zM1 9h9M5 7v5" fill="#f6c9ac" stroke="#c9713e" strokeWidth="1.200" /><path d="M9 1l4 4M13 1L9 5" stroke="#c5281f" strokeWidth="1.800" /><Arrow /></>,
  <><path d="M2 3l3-2v10l-3 2zM5 1l5 2v10H2" fill="#b5daf4" stroke="#357fb8" /><Arrow /></>,
  <><path d="M1 4h7M4.500 1v7M2 3L1 4l1 1M7 3l1 1-1 1" stroke="#333" strokeWidth="1.200" /><Arrow /></>,
];

const StatusBar = () => (
  <footer className="flex items-center h-[19px] bg-gradient-to-b from-[#e4e4e4] to-[#bcbcbc] border-t border-t-[#a8a8a8] border-b-2 border-b-[#807f72] text-[#333] whitespace-nowrap">
    <span className="flex-[333] min-w-0 pl-[2px]">墙 : 基本墙 : 常规 - 200mm</span>
    <div className="flex-[462] min-w-0 flex items-center">
      <Mini><path d="M1 7l3-2 3 2v5l-3 1-3-1z" fill="#b5daf4" stroke="#2f73a8" /><path d="M5 4l3-3 3 2v8H8V6z" fill="#cfe9d0" stroke="#3d8b54" /><path d="M9 6h4v6H9z" fill="#dbeaf6" stroke="#2f73a8" /></Mini>
      <div className="flex-[141] min-w-0 flex items-center h-[13px] ml-[5px] pr-[2px] bg-white">
        <select aria-label="工作集" className="flex-1 min-w-0 appearance-none"><option></option></select>
        <span className="opacity-50"><Chevron /></span>
      </div>
      <button className="flex items-center gap-1 pl-[3px] w-[42px]"><Mini><path d="M2 2h10l-4 5v4l-3 2V7z" fill="#ddd" stroke="#a8a8a8" /></Mini>:0</button>
      <button aria-label="设计选项" className="w-[19px]"><Mini><path d="M1 2h12v11H1z" fill="#eee" strokeWidth="1.200" /><path d="M1 3h12" strokeWidth="2" /><path d="M4 6v5M4 7h7M5 9h6M5 11h6" /></Mini></button>
      <button aria-label="添加到集" className="w-[15px]"><Mini className="w-[11px] h-[11px]"><path d="M1 2h12v10H1z" fill="#a9abad" stroke="#999" /><path d="M4 5h4v4H4zM9 4h2M9 7h2M3 11h8" stroke="#f2f2f2" /></Mini></button>
      <div className="flex-[107] min-w-0 flex items-center h-[13px] pl-[2px] pr-[2px] bg-white">
        <select aria-label="活动设计选项" className="flex-1 min-w-0 appearance-none text-[#888]"><option>主模型</option></select>
        <span className="opacity-50"><Chevron /></span>
      </div>
      <span className="flex-[112]" />
    </div>
    <div className="flex items-center gap-[5px] w-[154px] shrink-0">
      {selectIcons.map((s, i) => <button key={i} aria-label={`选择选项 ${i + 1}`}><Mini>{s}</Mini></button>)}
      <button className="flex items-end leading-[10px]"><Mini><path d="M1 2h12L8 8v5H6V8z" fill="#eee" /></Mini>:0</button>
    </div>
  </footer>
);

export default function App() {
  return (
    <div className="min-h-screen bg-white pt-[9px] pl-[6px] pr-6 text-[8px] text-[#333] font-['Noto_Sans','Noto_Sans_CJK_SC',sans-serif]">
      <div className="bg-[#e2e3e4]">
        <Header />
        <div className="flex gap-1 pt-[17px]">
          <Properties />
          <DrawingArea />
          <Browser />
        </div>
        <StatusBar />
      </div>
      <p className="flex items-baseline justify-center gap-[13px] text-[34px] leading-[54px] font-light text-black font-['Noto_Sans_CJK_SC',sans-serif]">
        图<span className="text-[40px] font-extralight font-['DejaVu_Sans',sans-serif]">3</span>
      </p>
    </div>
  );
}
